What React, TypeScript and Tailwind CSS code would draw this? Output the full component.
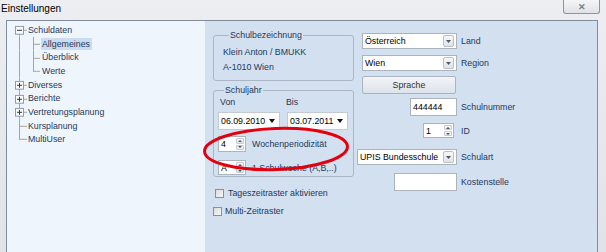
import React from "react";

const F = "font-['Liberation_Sans',Arial,sans-serif]";

function TreeGutter({ kind }: { kind: "first" | "mid" | "last" | "child" | "childLast" | "plus" | "leaf" }) {
  const c = "#a3a3a3";
  if (kind === "child" || kind === "childLast") {
    return (
      <svg width="34" height="14" viewBox="0 0 34 14" preserveAspectRatio="none" className="h-full shrink-0" shapeRendering="crispEdges">
        <line x1="12.5" y1="0" x2="12.5" y2="14" stroke={c} />
        <line x1="26.5" y1="0" x2="26.5" y2={kind === "childLast" ? 7.5 : 14} stroke={c} />
        <line x1="26" y1="7.5" x2="33" y2="7.5" stroke={c} />
      </svg>
    );
  }
  const box = kind === "first" || kind === "plus";
  const y1 = kind === "first" ? 7 : 0;
  const y2 = kind === "last" ? 7.5 : 14;
  return (
    <svg width="20" height="14" viewBox="0 0 20 14" preserveAspectRatio="none" className="h-full shrink-0" shapeRendering="crispEdges">
      <line x1="12.5" y1={y1} x2="12.5" y2={y2} stroke={c} />
      <line x1="12" y1="7.5" x2="20" y2="7.5" stroke={c} />
      {box && (
        <>
          <rect x="8.5" y="3.5" width="8" height="8" fill="#fbfbfb" stroke="#8f9aa6" />
          <line x1="10" y1="7.5" x2="15" y2="7.5" stroke="#2a3a4a" />
          {kind === "plus" && <line x1="12.5" y1="5" x2="12.5" y2="10" stroke="#2a3a4a" />}
        </>
      )}
    </svg>
  );
}

function TreeRow({ kind, label, selected }: { kind: any; label: string; selected?: boolean }) {
  return (
    <div className="flex items-center h-[13.625px]">
      <TreeGutter kind={kind} />
      <span className={`leading-[12px] ${selected ? "bg-[#cadcf2] pl-[1px] pr-[2px]" : "pl-[1px]"}`}>{label}</span>
    </div>
  );
}

function DropBtn() {
  return (
    <div className="w-[11px] h-[12px] mr-[2px] rounded-[2px] border border-[#b9c0c9] bg-gradient-to-b from-[#f6f7f8] to-[#dfe3e8] flex items-center justify-center">
      <svg width="5" height="3" viewBox="0 0 5 3"><path d="M0 0h5L2.5 3z" fill="#4d5866" /></svg>
    </div>
  );
}

function Combo({ w, text }: { w: string; text: string }) {
  return (
    <div className={`${w} h-[16px] bg-white border border-[#abb3bd] flex items-center`}>
      <span className="flex-1 pl-[2px] text-black leading-[12px]">{text}</span>
      <DropBtn />
    </div>
  );
}

function DateBox({ w, text }: { w: string; text: string }) {
  return (
    <div className={`${w} h-[18px] bg-white border border-[#c3cad3] flex items-center`}>
      <span className="flex-1 pl-[2px] text-black leading-[12px]">{text}</span>
      <svg width="6" height="4" viewBox="0 0 6 4" className="mr-[4px]"><path d="M0 0h6L3 4z" fill="#111" /></svg>
    </div>
  );
}

function Spin({ w, h, text }: { w: string; h: string; text: string }) {
  return (
    <div className={`${w} ${h} bg-white border border-[#abb3bd] flex items-stretch`}>
      <span className="flex-1 pl-[2px] text-black leading-[12px] self-center">{text}</span>
      <div className="w-[9px] flex flex-col gap-[1px] py-[1px] pr-[1px]">
        <div className="flex-1 border border-[#c3cad3] rounded-[1px] bg-gradient-to-b from-[#f7f8fa] to-[#e3e7ec] flex items-center justify-center">
          <svg width="4" height="2" viewBox="0 0 4 2"><path d="M0 2h4L2 0z" fill="#4d5866" /></svg>
        </div>
        <div className="flex-1 border border-[#c3cad3] rounded-[1px] bg-gradient-to-b from-[#f7f8fa] to-[#e3e7ec] flex items-center justify-center">
          <svg width="4" height="2" viewBox="0 0 4 2"><path d="M0 0h4L2 2z" fill="#4d5866" /></svg>
        </div>
      </div>
    </div>
  );
}

function Field({ mt, children, label, pr }: { mt: string; children: React.ReactNode; label: string; pr?: string }) {
  return (
    <div className={`flex items-center ${mt}`}>
      <div className={`w-[100px] flex justify-end ${pr ?? ""}`}>{children}</div>
      <span className="ml-[4px] leading-[12px] text-[#1e395b]">{label}</span>
    </div>
  );
}

function Check({ label, ml, gap, mt }: { label: string; ml: string; gap: string; mt: string }) {
  return (
    <div className={`flex items-center ${ml} ${mt}`}>
      <div className="w-[9px] h-[9px] border border-[#8e8f8f] bg-gradient-to-br from-[#dcdcdc] to-[#f6f6f6]" />
      <span className={`${gap} leading-[12px] text-[#1e395b]`}>{label}</span>
    </div>
  );
}

export default function App() {
  return (
    <div className={`relative w-[606px] h-[252px] overflow-hidden flex flex-col bg-gradient-to-b from-[#eceef1] to-[#e0e3e7] ${F} text-[8.8px] text-[#1e395b]`}>
      {/* title bar */}
      <div className="h-[20px] flex items-start shrink-0">
        <span className="pl-[1px] pt-[3px] text-[10px] leading-[12px] text-black">Einstellungen</span>
        <div className="ml-auto mr-[6px] w-[37px] h-[14px] rounded-b-[3px] border border-t-0 border-[#8d949c] bg-gradient-to-b from-[#f4f5f6] to-[#dfe2e6] flex items-center justify-center">
          <span className="text-[9px] leading-[10px] text-[#7a7f86] font-bold">✕</span>
        </div>
      </div>
      {/* body */}
      <div className="flex-1 flex pl-[6px] pr-[8px] min-h-0">
        {/* tree */}
        <div className="w-[199px] shrink-0 border-l border-t border-[#828d9a] bg-[#eef5fd] pt-[2.4px]">
          <TreeRow kind="first" label="Schuldaten" />
          <TreeRow kind="child" label="Allgemeines" selected />
          <TreeRow kind="child" label="Überblick" />
          <TreeRow kind="childLast" label="Werte" />
          <TreeRow kind="plus" label="Diverses" />
          <TreeRow kind="plus" label="Berichte" />
          <TreeRow kind="plus" label="Vertretungsplanung" />
          <TreeRow kind="mid" label="Kursplanung" />
          <TreeRow kind="last" label="MultiUser" />
        </div>
        {/* settings panel */}
        <div className="flex-1 border-t border-r border-[#828d9a] bg-[#d3e0f0] flex items-start pl-[8px]">
          {/* left column */}
          <div className="w-[141px] flex flex-col pt-[8px]">
            <fieldset className="border border-[#aab6c6] rounded-[3px] pl-[9px] pb-[7px]">
              <legend className="ml-[6px] px-[1px] leading-[12px] text-[#1e395b]">Schulbezeichnung</legend>
              <div className="mt-[5px] leading-[12px] text-[#1e395b]">Klein Anton / BMUKK</div>
              <div className="mt-[3px] leading-[12px] text-[#1e395b]">A-1010 Wien</div>
            </fieldset>
            <fieldset className="mt-[3px] border border-[#aab6c6] rounded-[3px] pl-[4px] pb-[1px]">
              <legend className="ml-[6px] px-[1px] leading-[12px] text-[#1e395b]">Schuljahr</legend>
              <div className="flex leading-[12px] text-[#1e395b]">
                <span className="ml-[2px] w-[66px]">Von</span>
                <span>Bis</span>
              </div>
              <div className="flex mt-[4px] gap-[7px]">
                <DateBox w="w-[62px]" text="06.09.2010" />
                <DateBox w="w-[61px]" text="03.07.2011" />
              </div>
              <div className="flex items-center mt-[6px]">
                <Spin w="w-[28px]" h="h-[16px]" text="4" />
                <span className="ml-[6px] leading-[12px] text-[#1e395b]">Wochenperiodizität</span>
              </div>
              <div className="flex items-center mt-[8px]">
                <Spin w="w-[28px]" h="h-[15px]" text="A" />
                <span className="ml-[6px] leading-[12px] text-[#1e395b]">1.Schulwoche (A,B,..)</span>
              </div>
            </fieldset>
            <Check label="Tageszeitraster aktivieren" ml="ml-[2px]" gap="ml-[4px]" mt="mt-[10px]" />
            <Check label="Multi-Zeitraster" ml="ml-0" gap="ml-[3px]" mt="mt-[6px]" />
          </div>
          {/* right column */}
          <div className="ml-[3px] flex flex-col pt-[12px]">
            <Field mt="mt-0" label="Land"><Combo w="w-[95px]" text="Österreich" /></Field>
            <Field mt="mt-[6px]" label="Region"><Combo w="w-[95px]" text="Wien" /></Field>
            <div className="mt-[5px] w-[100px] flex justify-end">
              <div className="w-[94px] h-[18px] mr-[1px] rounded-[2px] border border-[#a9b4c2] bg-gradient-to-b from-[#f2f4f7] to-[#dde3ea] flex items-center justify-center leading-[12px] text-[#333]">
                Sprache
              </div>
            </div>
            <Field mt="mt-[4px]" label="Schulnummer">
              <div className="w-[47px] h-[18px] bg-white border border-[#abb3bd] flex items-center pl-[2px] leading-[12px] text-black">444444</div>
            </Field>
            <Field mt="mt-[7px]" label="ID" pr="pr-[3px]">
              <Spin w="w-[31px]" h="h-[15px]" text="1" />
            </Field>
            <Field mt="mt-[11px]" label="Schulart"><Combo w="w-[100px]" text="UPIS Bundesschule" /></Field>
            <Field mt="mt-[8px]" label="Kostenstelle">
              <div className="w-[63px] h-[18px] bg-white border border-[#abb3bd]" />
            </Field>
          </div>
        </div>
      </div>
      {/* red annotation ellipse */}
      <svg className="absolute left-[200px] top-[124px] pointer-events-none" width="155" height="52" viewBox="0 0 155 52">
        <ellipse cx="76" cy="25" rx="71.5" ry="20.5" fill="none" stroke="#e3000f" strokeWidth="3" transform="rotate(-2 76 25)" />
      </svg>
    </div>
  );
}
